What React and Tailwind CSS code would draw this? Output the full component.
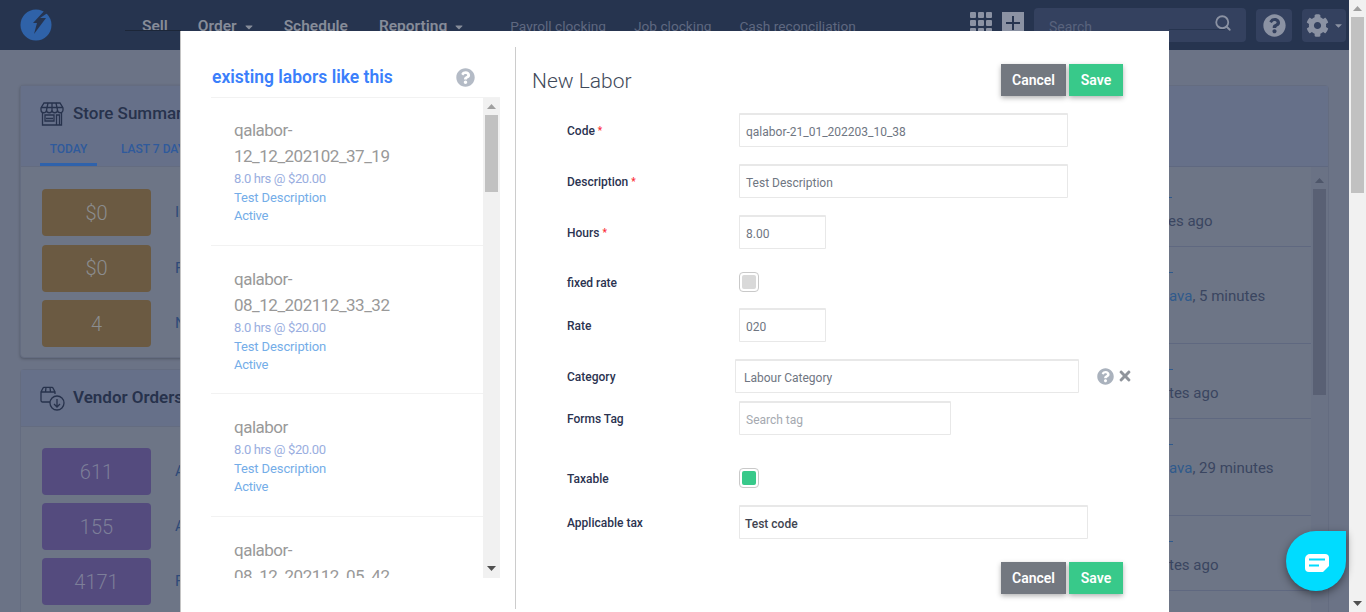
import React from "react";
import { Search } from "lucide-react";
import { FaQuestionCircle, FaTimes, FaCog, FaCaretDown } from "react-icons/fa";

const font = { fontFamily: "Roboto, 'Liberation Sans', sans-serif" };

const labors = [
  { lines: ["qalabor-", "12_12_202102_37_19"], h: "h-[148px]", pt: "pt-[19px]" },
  { lines: ["qalabor-", "08_12_202112_33_32"], h: "h-[148px]", pt: "pt-[20px]" },
  { lines: ["qalabor"], h: "h-[123px]", pt: "pt-[20px]" },
  { lines: ["qalabor-", "08_12_202112_05_42"], h: "h-[148px]", pt: "pt-[20px]" },
];

const activity = [
  { h: "h-[80px]", pt: "pt-[33px]", pre: "", text: "es ago", pl: "pl-[0px]" },
  { h: "h-[97px]", pt: "pt-[28px]", pre: "ava", text: ", 5 minutes", pl: "pl-px" },
  { h: "h-[75px]", pt: "pt-[28px]", pre: "", text: "tes ago", pl: "pl-px" },
  { h: "h-[97px]", pt: "pt-[28px]", pre: "ava", text: ", 29 minutes", pl: "pl-px" },
  { h: "h-[75px]", pt: "pt-[28px]", pre: "", text: "tes ago", pl: "pl-px" },
];

const Arrow = ({ up, className }) => (
  <svg width="9" height="5" viewBox="0 0 9 5" className={className}>
    <path d={up ? "M4.5 0L9 5H0z" : "M0 0h9L4.5 5z"} fill="currentColor" />
  </svg>
);

const StatBox = ({ value, label, color }) => (
  <div className="flex items-center h-[47px]">
    <div className={`w-[109px] h-full rounded flex items-center justify-center text-[20px] font-light ${color}`}>
      {value}
    </div>
    <span className="ml-6 text-[15px] text-[#2f4a78]">{label}</span>
  </div>
);

const Field = ({ label, required, className, children }) => (
  <div className={`flex items-center ${className}`}>
    <label className="w-[172px] pt-[2px] leading-[16px] text-[12px] font-medium text-[#2b3350]">
      {label}
      {required && <span className="text-red-500 ml-[3px] text-[10px] align-top">*</span>}
    </label>
    {children}
  </div>
);

const Input = ({ value, className = "", pad = "pl-[6px]", text = "text-[#6f7682] text-[12px]" }) => (
  <div className={`h-[34px] border border-t-2 border-[#e8e8e8] flex items-center pt-[2px] rounded-[1px] ${pad} ${text} ${className}`}>
    {value}
  </div>
);

const Check = ({ color }) => (
  <div className="w-5 h-5 border border-[#c9c9c9] rounded-[4px] flex items-center justify-center">
    <div className={`w-[14px] h-[14px] rounded-[2px] ${color}`} />
  </div>
);

const Buttons = () => (
  <div className="flex gap-[3px]">
    <button className="w-[65px] h-8 bg-[#737880] text-white text-[14px] font-semibold shadow-[0_2px_5px_rgba(0,0,0,0.3)]">
      Cancel
    </button>
    <button className="w-[54px] h-8 bg-[#38c98a] text-white text-[14px] font-semibold shadow-[0_2px_5px_rgba(0,0,0,0.3)]">
      Save
    </button>
  </div>
);

const Navbar = () => (
  <div className="h-[50px] bg-[#26344f] flex items-center relative">
    <svg width="32" height="32" viewBox="0 0 32 32" className="ml-5 shrink-0">
      <circle cx="16" cy="16" r="15.5" fill="#2f62a8" />
      <path d="M26 0 L13 14 H17 L14 25 L26 9 H20 L29 3z" fill="#26344f" />
    </svg>
    <div className="flex items-center h-full ml-[90px] text-[#868c99] text-[15.5px] font-semibold pt-[3px]">
      <span>Sell</span>
      <span className="ml-[30px] flex items-center">Order <FaCaretDown className="ml-1.5 text-xs" /></span>
      <span className="ml-[29px]">Schedule</span>
      <span className="ml-[31px] flex items-center">Reporting <FaCaretDown className="ml-1.5 text-xs" /></span>
    </div>
    <div className="flex items-center gap-[28px] ml-[45px] text-[#5f6880] text-[13.7px] pt-[3px]">
      <span>Payroll clocking</span>
      <span>Job clocking</span>
      <span>Cash reconciliation</span>
    </div>
    <div className="absolute left-[125px] top-[30px] w-[56px] h-px bg-[#1c2638]" />
    <div className="ml-auto flex items-center pr-[3px]">
      <svg width="22" height="22" viewBox="0 0 22 22" fill="#8b92a3" className="-mt-1">
        <rect x="0" y="0" width="6" height="6" rx="1" />
        <rect x="8" y="0" width="6" height="6" rx="1" />
        <rect x="16" y="0" width="6" height="6" rx="1" />
        <rect x="0" y="8" width="6" height="6" rx="1" />
        <rect x="8" y="8" width="6" height="6" rx="1" />
        <rect x="16" y="8" width="6" height="6" rx="1" />
        <rect x="0" y="16" width="6" height="6" rx="1" />
        <rect x="8" y="16" width="6" height="6" rx="1" />
        <rect x="16" y="16" width="6" height="6" rx="1" />
      </svg>
      <svg width="22" height="22" viewBox="0 0 22 22" className="ml-[10px] -mt-1">
        <rect width="22" height="22" fill="#8b92a3" />
        <path d="M10 4h2v6h6v2h-6v6h-2v-6H4v-2h6z" fill="#26344f" />
      </svg>
      <div className="ml-[10px] w-[212px] h-[34px] rounded bg-[#34415f] flex items-center justify-between pl-[15px] pr-[14px] text-[14px] text-[#59637d] relative">
        <span className="pt-1">Search</span>
        <Search size={18} strokeWidth={2.4} className="text-[#8b92a3] -mt-1" />
        <div className="absolute left-[135px] top-[21px] w-[56px] h-px bg-[#26344f]" />
      </div>
      <div className="ml-[10px] w-9 h-[33px] rounded bg-[#34415f] flex items-center justify-center">
        <FaQuestionCircle className="text-[23px] text-[#8b92a3]" />
      </div>
      <div className="ml-[10px] w-[44px] h-[33px] rounded bg-[#34415f] flex items-center pl-1">
        <FaCog className="text-[23px] text-[#8b92a3]" />
        <FaCaretDown className="text-[11px] text-[#8b92a3] ml-[4px]" />
      </div>
    </div>
  </div>
);

const Background = () => (
  <div className="flex-1 h-[612px] bg-[#6b7386] overflow-hidden">
    <Navbar />
    <div className="flex pt-[35px] px-5">
      <div className="w-[400px] shrink-0">
        <div className="h-[273px] rounded bg-[#6d7586] border border-[#646c80] shadow-[0_1px_3px_rgba(0,0,0,0.25)]">
          <div className="h-[81px] bg-[#667089] border-b border-[#646c80]">
            <div className="flex items-center pl-[19px] pt-[15px] text-[17px] font-medium text-[#27324c]">
              <svg width="24" height="24" viewBox="0 0 24 24" fill="none" stroke="currentColor" strokeWidth="1.3">
                <path d="M4 1h16l3 5v2a2.5 2.5 0 0 1-5.5 0 2.75 2.75 0 0 1-5.5 0 2.75 2.75 0 0 1-5.5 0A2.5 2.5 0 0 1 1 8V6z" />
                <path d="M1 5.5h22M8 1L6.5 8M16 1l1.5 7M12 1v7" />
                <path d="M2.5 11v12h19V11" />
                <path d="M5 13h9v6H5zM16.5 23V13h3v10M6 16.5h7" />
              </svg>
              <span className="ml-[9px]">Store Summary</span>
            </div>
            <div className="flex mt-[13px] text-[12px] font-medium text-[#2f5a9c]">
              <span className="ml-[19px] w-[57px] h-[26px] text-center border-b-[3px] border-[#2f62ab]">TODAY</span>
              <span className="ml-6">LAST 7 DAYS</span>
            </div>
          </div>
          <div className="flex flex-col gap-[8.5px] pl-[21px] pt-[22px]">
            <StatBox value="$0" label="Invoices" color="bg-[#6b5a42] text-[#8b8d8f]" />
            <StatBox value="$0" label="Fees" color="bg-[#6b5a42] text-[#8b8d8f]" />
            <StatBox value="4" label="New" color="bg-[#6b5a42] text-[#8b8d8f]" />
          </div>
        </div>
        <div className="mt-[11px] h-[300px] rounded bg-[#6d7586] border border-[#646c80]">
          <div className="h-[57px] bg-[#667089] border-b border-[#646c80] flex items-center pl-[19px] text-[17px] font-semibold text-[#27324c]">
            <svg width="25" height="25" viewBox="0 0 25 25" fill="none" stroke="currentColor" strokeWidth="1.3">
              <path d="M10 16H2.5A1.5 1.5 0 0 1 1 14.5V6l2-4a1.5 1.5 0 0 1 1-.7h8a1.5 1.5 0 0 1 1 .7l2 4v2M1 6h14M6 1.3L5.5 6M10 1.3l.5 4.7" />
              <circle cx="17" cy="17" r="7" />
              <path d="M17 13v8M14 18l3 3 3-3" />
            </svg>
            <span className="ml-[8px]">Vendor Orders</span>
          </div>
          <div className="flex flex-col gap-2 pl-[21px] pt-[21px]">
            <StatBox value="611" label="All" color="bg-[#544b7e] text-[#7d7f99]" />
            <StatBox value="155" label="Accepted" color="bg-[#544b7e] text-[#7d7f99]" />
            <StatBox value="4171" label="Fulfilled" color="bg-[#544b7e] text-[#7d7f99]" />
          </div>
        </div>
      </div>
      <div className="ml-auto w-[640px] rounded border border-[#646c80] h-[560px]">
        <div className="h-[81px] bg-[#667089] border-b border-[#5f6880]" />
        <div className="flex bg-[#6d7586] h-full">
          <div className="flex-1 pl-[478px]">
            {activity.map((row, i) => (
              <div key={i} className={`border-b border-[#5f6880] text-[15px] text-[#3a4560] ${row.h} ${row.pt} ${row.pl}`}>
                <div className="h-[1px] w-1 bg-[#2f5a8c] -mt-[3px] mb-[12px]" />
                <span className="text-[#2f5a8c]">{row.pre}</span>
                {row.text}
              </div>
            ))}
          </div>
          <div className="w-[17px] bg-[#6a7285] flex flex-col items-center text-[#4e566a] pt-[11px]">
            <Arrow up />
            <div className="w-[13px] h-[206px] mt-[6px] bg-[#596074]" />
          </div>
        </div>
      </div>
    </div>
  </div>
);

const LaborList = () => (
  <div className="relative h-[480px] overflow-hidden">
    <div className="w-[272px]">
      {labors.map((item, i) => (
        <div key={i} className={`pl-[23px] border-b border-[#f2f2f2] ${item.h} ${item.pt}`}>
          {item.lines.map((line) => (
            <div key={line} className="text-[17px] tracking-[-0.5px] leading-[26px] text-[#999999]">{line}</div>
          ))}
          <div className="mt-px text-[13px] tracking-[-0.37px] leading-[18.7px] text-[#9aaee0]">8.0 hrs @ $20.00</div>
          <div className="text-[13px] tracking-[-0.12px] leading-[18.7px] text-[#74ade8]">Test Description</div>
          <div className="text-[13px] tracking-[-0.3px] leading-[18.7px] text-[#74ade8]">Active</div>
        </div>
      ))}
    </div>
    {/* list scrollbar */}
    <div className="absolute right-0 top-0 bottom-0 w-[17px] bg-[#f1f1f1] flex flex-col items-center text-[#a0a0a0] pt-[6px]">
      <Arrow up />
      <div className="w-[13px] h-[77px] mt-[6px] bg-[#c1c1c1]" />
      <Arrow className="mt-auto mb-[7px] text-[#505050]" />
    </div>
  </div>
);

const LaborForm = () => (
  <div className="pl-4 flex-1">
    <div className="flex items-start justify-between pr-[46px] pt-[17px]">
      <h2 className="text-[21px] leading-[28px] font-light text-[#3f4a5a] mt-[3px]">New Labor</h2>
      <Buttons />
    </div>
    <div className="pl-[35px]">
      <Field label="Code" required className="mt-[17px]">
        <Input value="qalabor-21_01_202203_10_38" className="w-[329px]" />
      </Field>
      <Field label="Description" required className="mt-[17px]">
        <Input value="Test Description" className="w-[329px]" />
      </Field>
      <Field label="Hours" required className="mt-[17px]">
        <Input value="8.00" className="w-[87px]" />
      </Field>
      <Field label="fixed rate" className="mt-[23px]">
        <Check color="bg-[#d9d9d9]" />
      </Field>
      <Field label="Rate" className="mt-4">
        <Input value="020" className="w-[87px]" />
      </Field>
      <Field label="Category" className="mt-[17px]">
        <Input value="Labour Category" className="w-[344px] -ml-1" pad="pl-[8px]" />
        <FaQuestionCircle className="ml-[18px] text-[17px] text-[#aab2bd]" />
        <FaTimes className="ml-[3px] text-[16px] text-[#8f949b]" />
      </Field>
      <Field label="Forms Tag" className="mt-2">
        <Input value="Search tag" className="w-[212px]" text="text-[#a5a9b0] text-[12px]" />
      </Field>
      <Field label="Taxable" className="mt-[33px]">
        <Check color="bg-[#38c98a]" />
      </Field>
      <Field label="Applicable tax" className="mt-[17px]">
        <Input value="Test code" className="w-[349px]" pad="pl-[5px]" text="text-[#3f4450] text-[12px] font-medium" />
      </Field>
    </div>
    <div className="flex justify-end pr-[46px] mt-[23px]">
      <Buttons />
    </div>
  </div>
);

const Modal = () => (
  <div className="absolute left-[180px] top-[31px] w-[989px] h-[581px] bg-white border-l border-[#c4c4c4] flex pt-4">
    <div className="w-[334px] pl-[30px] pr-[15px] shrink-0">
      <div className="h-[51px] pt-[17px] pl-px flex justify-between border-b border-[#f2f2f2] pr-[17px]">
        <span className="text-[17.5px] font-semibold text-[#3b7ffb]">existing labors like this</span>
        <FaQuestionCircle className="text-[19px] text-[#b4bbc6] mt-[4px] mr-[8px]" />
      </div>
      <LaborList />
    </div>
    <div className="h-[562px] border-l border-[#cccccc]" />
    <LaborForm />
  </div>
);

const ChatBubble = () => (
  <div className="absolute left-[1286px] top-[531px] w-[60px] h-[60px] rounded-full rounded-tr-[6px] bg-[#00dcff] shadow-[0_3px_8px_rgba(0,0,0,0.45)] flex items-center justify-center">
    <svg width="24" height="18" viewBox="0 0 24 18" className="mt-[3px] ml-px">
      <path d="M5 0h15a4 4 0 0 1 4 4v8l-6 6H4a4 4 0 0 1-4-4V5a5 5 0 0 1 5-5z" fill="#ffffff" />
      <rect x="4" y="4.5" width="16" height="2" fill="#00dcff" />
      <rect x="4" y="10.5" width="10" height="2" fill="#00dcff" />
    </svg>
  </div>
);

export default function App() {
  return (
    <div className="relative h-[612px] overflow-hidden flex" style={font}>
      <Background />
      <div className="w-[17px] h-[612px] bg-[#f1f1f1] flex flex-col items-center pt-[6px] text-[#a0a0a0] shrink-0">
        <Arrow up />
        <div className="w-[13px] h-[176px] mt-[6px] bg-[#c1c1c1]" />
        <Arrow className="mt-auto mb-[6px] text-[#505050]" />
      </div>
      <Modal />
      <ChatBubble />
    </div>
  );
}
